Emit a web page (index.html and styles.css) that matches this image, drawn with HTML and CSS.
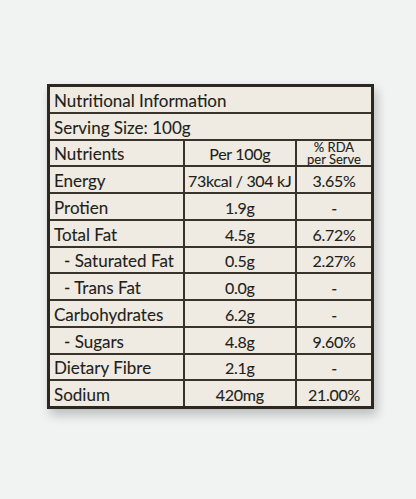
FILE: index.html
```html
<!DOCTYPE html>
<html>
<head>
<meta charset="utf-8">
<link rel="stylesheet" href="styles.css">
</head>
<body>
<div class="page">
  <div class="label">
    <div class="cell full">Nutritional Information</div>
    <div class="cell full">Serving Size: 100g</div>
    <div class="cell name">Nutrients</div>
    <div class="cell val">Per 100g</div>
    <div class="cell val rda-head">% RDA<br>per Serve</div>

    <div class="cell name">Energy</div>
    <div class="cell val">73kcal / 304 kJ</div>
    <div class="cell val">3.65%</div>

    <div class="cell name">Protien</div>
    <div class="cell val">1.9g</div>
    <div class="cell val">-</div>

    <div class="cell name">Total Fat</div>
    <div class="cell val">4.5g</div>
    <div class="cell val">6.72%</div>

    <div class="cell name sub">- Saturated Fat</div>
    <div class="cell val">0.5g</div>
    <div class="cell val">2.27%</div>

    <div class="cell name sub">- Trans Fat</div>
    <div class="cell val">0.0g</div>
    <div class="cell val">-</div>

    <div class="cell name">Carbohydrates</div>
    <div class="cell val">6.2g</div>
    <div class="cell val">-</div>

    <div class="cell name sub">- Sugars</div>
    <div class="cell val">4.8g</div>
    <div class="cell val">9.60%</div>

    <div class="cell name">Dietary Fibre</div>
    <div class="cell val">2.1g</div>
    <div class="cell val">-</div>

    <div class="cell name">Sodium</div>
    <div class="cell val">420mg</div>
    <div class="cell val">21.00%</div>
  </div>
</div>
</body>
</html>
```

FILE: styles.css
```css
html, body {
  margin: 0;
  padding: 0;
  background: #f1f2f2;
}

.page {
  width: 416px;
  height: 499px;
  padding: 84px 0 0 47px;
  box-sizing: border-box;
}

.label {
  display: grid;
  grid-template-columns: 132.5px 110.5px 74px;
  grid-auto-rows: 24.75px;
  gap: 2px;
  width: max-content;
  background: #3a332b;
  border: 3px solid #2c2721;
  box-shadow: 3px 6px 10px rgba(0, 0, 0, 0.22);
  font-family: "Lato", "Liberation Sans", sans-serif;
  font-size: 17px;
  color: #221e19;
  -webkit-text-stroke: 0.1px #221e19;
}

.cell {
  background: #efebe3;
  display: flex;
  align-items: center;
  padding-top: 2px;
  box-sizing: border-box;
  white-space: nowrap;
}

.full {
  grid-column: 1 / -1;
  padding-left: 4px;
}

.name {
  padding-left: 4px;
}

.name.sub {
  padding-left: 14px;
}

.val {
  justify-content: center;
  font-size: 16px;
  letter-spacing: -0.3px;
}

.rda-head {
  display: block;
  text-align: center;
  font-size: 13px;
  line-height: 12.2px;
  letter-spacing: 0;
  padding-top: 0;
}
```
